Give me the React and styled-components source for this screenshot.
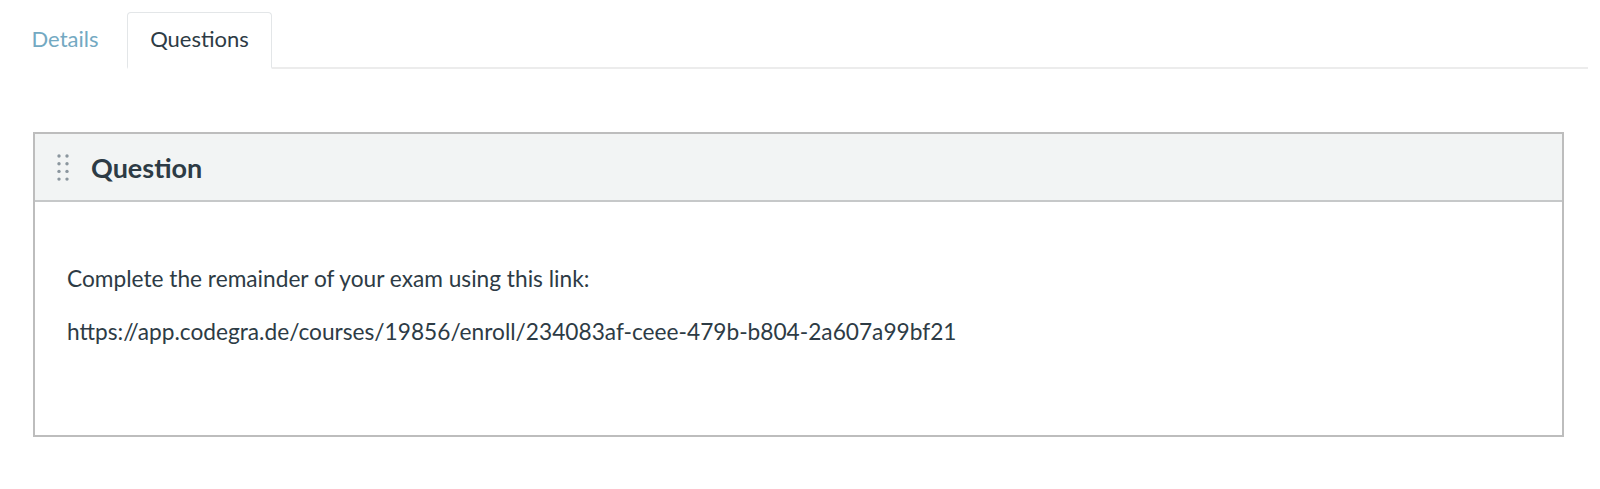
import React from 'react';
import styled, { createGlobalStyle } from 'styled-components';

const GlobalStyle = createGlobalStyle`
  body {
    margin: 0;
    background: #fff;
    font-family: Lato, "Open Sans", sans-serif;
  }
`;

const Page = styled.div`
  padding: 12px 12px 0 7px;
`;

const TabBar = styled.div`
  display: flex;
  border-bottom: 2px solid #ececec;
  height: 55px;
`;

const Tab = styled.div`
  display: flex;
  align-items: center;
  justify-content: center;
  margin-bottom: -2px;
  padding: 0 ${props => props.shift || 0}px 4px 0;
  font-size: 22px;
  color: ${props => (props.active ? '#2d3b45' : '#73a9c2')};
  background: #fff;
  border: 1px solid ${props => (props.active ? '#e3e6e8' : 'transparent')};
  border-bottom: 2px solid ${props => (props.active ? '#fff' : 'transparent')};
  border-radius: 4px 4px 0 0;
  width: ${props => props.width}px;
  box-sizing: border-box;
`;

const Panel = styled.div`
  margin: 63px 24px 0 26px;
  border: 2px solid #bdbdbd;
`;

const PanelHeader = styled.div`
  display: flex;
  align-items: center;
  height: 66px;
  background: #f2f4f4;
  border-bottom: 2px solid #c6c8c9;
  padding-left: 22px;
`;

const Title = styled.h2`
  margin: 0 0 0 22px;
  font-size: 27px;
  font-weight: 700;
  color: #2d3b45;
`;

const PanelBody = styled.div`
  padding: 61px 32px 87px;
  color: #2d3b45;
  font-size: 22.7px;
`;

const Line = styled.p`
  margin: 0 0 21px;
  line-height: 32px;
  &:last-child {
    margin-bottom: 0;
  }
`;

const DragHandle = () => (
  <svg width="12" height="28" viewBox="0 0 12 28">
    {[0, 1, 2, 3].map(r =>
      [0, 1].map(c => (
        <circle key={`${r}-${c}`} cx={2 + c * 8} cy={3 + r * 7.7} r="1.7" fill="#8b969e" />
      ))
    )}
  </svg>
);

const App = () => (
  <>
    <GlobalStyle />
    <Page>
      <TabBar>
        <Tab width={120} shift={4}>Details</Tab>
        <Tab active width={145}>Questions</Tab>
      </TabBar>
      <Panel>
        <PanelHeader>
          <DragHandle />
          <Title>Question</Title>
        </PanelHeader>
        <PanelBody>
          <Line>Complete the remainder of your exam using this link:</Line>
          <Line>https://app.codegra.de/courses/19856/enroll/234083af-ceee-479b-b804-2a607a99bf21</Line>
        </PanelBody>
      </Panel>
    </Page>
  </>
);

export default App;
